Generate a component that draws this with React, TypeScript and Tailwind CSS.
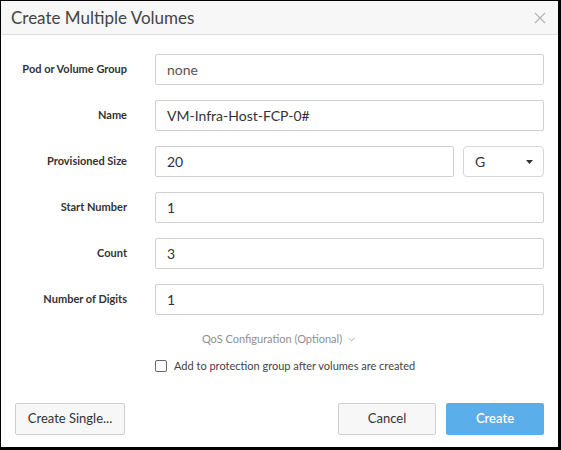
import { ChevronDown } from "lucide-react";

const rows = [
  { label: "Pod or Volume Group", value: "none", muted: true },
  { label: "Name", value: "VM-Infra-Host-FCP-0#" },
  { label: "Provisioned Size", value: "20", unit: "G" },
  { label: "Start Number", value: "1" },
  { label: "Count", value: "3" },
  { label: "Number of Digits", value: "1" },
];

export default function App() {
  return (
    <div className="w-[561px] h-[450px] bg-black pl-px pt-px pr-[3px] pb-[3px] font-['Lato',sans-serif]">
      <div className="h-full bg-white flex flex-col">
        <div className="h-[34px] shrink-0 bg-[#f7f7f7] border-b border-[#dedede] flex items-center justify-between pl-[10px] pr-[12px]">
          <span className="text-[17px] text-[#444]">Create Multiple Volumes</span>
          <svg width="12" height="12" viewBox="0 0 12 12" className="text-[#b5b5b5]">
            <path d="M1 1 L11 11 M11 1 L1 11" stroke="currentColor" strokeWidth="1.2" />
          </svg>
        </div>

        <div className="pt-[19px] pr-[14px] grid grid-cols-[126px_1fr] gap-x-[28px] gap-y-[15px]">
          {rows.map((r) => (
            <div key={r.label} className="contents">
              <div className="h-[31px] flex items-center justify-end text-[11px] font-bold text-[#333]">
                {r.label}
              </div>
              <div className="flex gap-[9px]">
                <div
                  className={`flex-1 h-[31px] border border-[#d0d0d0] rounded-[2px] flex items-center px-[11px] text-[14px] ${
                    r.muted ? "text-[#555]" : "text-[#333]"
                  }`}
                >
                  {r.value}
                </div>
                {r.unit && (
                  <div className="w-[81px] h-[31px] border border-[#d6d6d6] rounded-[4px] flex items-center justify-between pl-[11px] pr-[10px] text-[14px] text-[#333]">
                    <span>{r.unit}</span>
                    <svg width="7" height="4" viewBox="0 0 7 4">
                      <path d="M0 0 L7 0 L3.5 4 Z" fill="#333" />
                    </svg>
                  </div>
                )}
              </div>
            </div>
          ))}
        </div>

        <div className="mt-[16px] flex items-center justify-center gap-[4px] text-[11px] text-[#8f8f8f]">
          <span>QoS Configuration (Optional)</span>
          <ChevronDown size={11} strokeWidth={1.5} />
        </div>

        <div className="mt-[10px] pl-[154px] flex items-center gap-[7px] text-[11px] text-[#444]">
          <div className="w-[12px] h-[12px] border border-[#666] rounded-[2px]" />
          <span>Add to protection group after volumes are created</span>
        </div>

        <div className="mt-auto pb-[12px] px-[14px] flex items-center">
          <button className="w-[110px] h-[32px] border border-[#cfcfcf] bg-[#f7f7f7] rounded-[2px] text-[13px] text-[#333]">
            Create Single...
          </button>
          <div className="flex-1" />
          <button className="w-[98px] h-[32px] border border-[#cfcfcf] bg-[#f7f7f7] rounded-[2px] text-[13px] text-[#333]">
            Cancel
          </button>
          <button className="ml-[10px] w-[98px] h-[32px] bg-[#5aaeea] rounded-[2px] text-[13px] font-semibold text-white">
            Create
          </button>
        </div>
      </div>
    </div>
  );
}
